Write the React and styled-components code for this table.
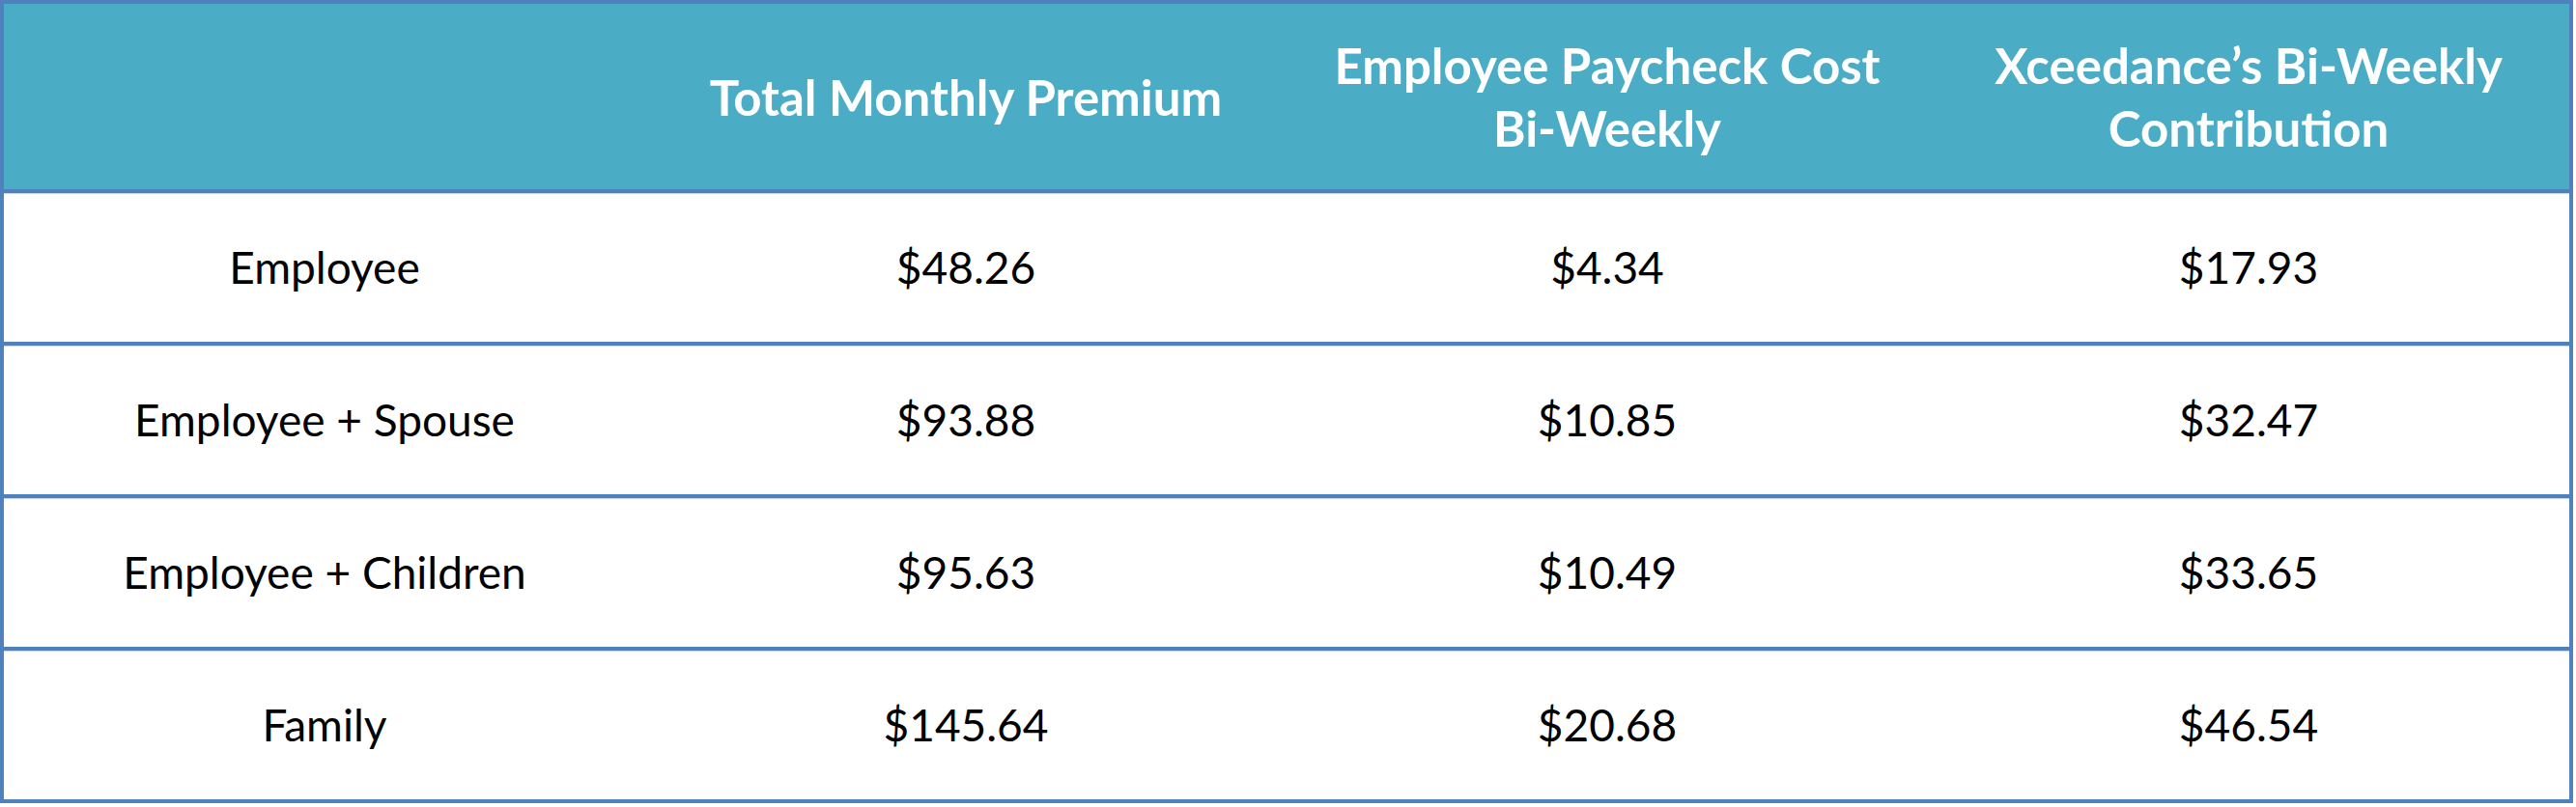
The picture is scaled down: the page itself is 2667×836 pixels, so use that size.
import styled, { createGlobalStyle } from "styled-components";

const GlobalStyle = createGlobalStyle`
  html, body {
    margin: 0;
    padding: 0;
    background: #ffffff;
  }
`;

const Table = styled.div`
  width: 2664px;
  border: 4px solid #4f81bd;
  box-sizing: border-box;
  font-family: Lato, "Open Sans", "Liberation Sans", sans-serif;
  background: #ffffff;
`;

const Row = styled.div`
  display: grid;
  grid-template-columns: repeat(4, 1fr);
  height: ${(p) => (p.$header ? "192px" : "154px")};
  background: ${(p) => (p.$header ? "#4bacc6" : "#ffffff")};
  border-bottom: 4px solid #4f81bd;

  & + & {
    box-shadow: inset 0 1px 0 #c6d9f1;
  }

  &:last-child {
    border-bottom: none;
  }
`;

const Cell = styled.div`
  display: flex;
  align-items: center;
  justify-content: center;
  text-align: center;
  color: #000000;
  font-size: 46px;
  line-height: 56px;
`;

const HeadCell = styled(Cell)`
  color: #ffffff;
  font-weight: 700;
  font-size: 51px;
  line-height: 65px;
`;

const headers = [
  "",
  "Total Monthly Premium",
  ["Employee Paycheck Cost", "Bi-Weekly"],
  ["Xceedance’s Bi-Weekly", "Contribution"],
];

const rows = [
  ["Employee", "$48.26", "$4.34", "$17.93"],
  ["Employee + Spouse", "$93.88", "$10.85", "$32.47"],
  ["Employee + Children", "$95.63", "$10.49", "$33.65"],
  ["Family", "$145.64", "$20.68", "$46.54"],
];

const App = () => {
  return (
    <>
      <GlobalStyle />
      <Table>
        <Row $header>
          {headers.map((h, i) => (
            <HeadCell key={i}>
              {Array.isArray(h) ? (
                <span>
                  {h[0]}
                  <br />
                  {h[1]}
                </span>
              ) : (
                h
              )}
            </HeadCell>
          ))}
        </Row>
        {rows.map((r) => (
          <Row key={r[0]}>
            {r.map((c, i) => (
              <Cell key={i}>{c}</Cell>
            ))}
          </Row>
        ))}
      </Table>
    </>
  );
};

export default App;
